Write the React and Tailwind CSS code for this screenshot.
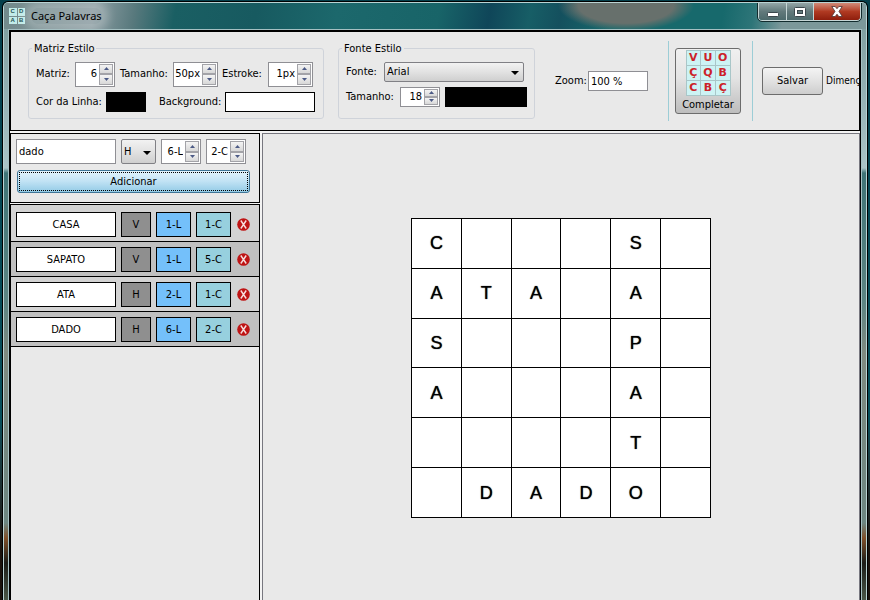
const WORDS = [
  { word: "CASA", dir: "V", line: 1, col: 1 },
  { word: "SAPATO", dir: "V", line: 1, col: 5 },
  { word: "ATA", dir: "H", line: 2, col: 1 },
  { word: "DADO", dir: "H", line: 6, col: 2 },
];

const SIZE = 6;

function buildMatrix() {
  const matrix = Array.from({ length: SIZE }, () => Array(SIZE).fill(""));
  for (const { word, dir, line, col } of WORDS) {
    [...word].forEach((letter, i) => {
      const r = line - 1 + (dir === "V" ? i : 0);
      const c = col - 1 + (dir === "H" ? i : 0);
      matrix[r][c] = letter;
    });
  }
  return matrix;
}

function AppIcon() {
  return (
    <span
      aria-hidden="true"
      className="grid size-4 shrink-0 grid-cols-2 gap-px font-['Liberation_Sans',sans-serif] text-[6px] leading-[7px] font-bold text-[#1f4f50]"
    >
      {["C", "D", "A", "B"].map((l) => (
        <span key={l} className="bg-[#c2ebe8] text-center">
          {l}
        </span>
      ))}
    </span>
  );
}

function TitleBar() {
  return (
    <header className="flex h-[26px] items-start justify-between pr-[5px] pl-[5px]">
      <div className="flex items-center gap-[6px] pt-[5px]">
        <AppIcon />
        <h1 className="rounded-full bg-white/15 font-['Noto_Sans',sans-serif] text-[11px] leading-4 text-black shadow-[0_0_8px_7px_rgba(255,255,255,0.22)]">
          Caça Palavras
        </h1>
      </div>
      <div className="flex h-[18px] overflow-hidden rounded-b-[4px] border border-t-0 border-[#c6d6d6] outline outline-[#122c2e]">
        <button
          aria-label="Minimizar"
          className="flex w-[28px] items-center justify-center border-r border-[#c6d6d6] bg-linear-to-b from-[#93a5a6] via-[#62797b] via-50% to-[#4d6a6c]"
        >
          <svg width="12" height="12" viewBox="0 0 12 12">
            <rect x="0.5" y="6.5" width="11" height="4" rx="1" fill="#fff" stroke="#3b474c" />
          </svg>
        </button>
        <button
          aria-label="Maximizar"
          className="flex w-[27px] items-center justify-center border-r border-[#c6d6d6] bg-linear-to-b from-[#93a5a6] via-[#62797b] via-50% to-[#4d6a6c]"
        >
          <svg width="12" height="10" viewBox="0 0 12 10">
            <rect x="0.5" y="0.5" width="11" height="9" rx="1" fill="#fff" stroke="#3b474c" />
            <rect x="3.5" y="3.5" width="5" height="3" fill="#62797b" stroke="#3b474c" />
          </svg>
        </button>
        <button
          aria-label="Fechar"
          className="flex w-[46px] items-center justify-center bg-linear-to-b from-[#d08a78] via-[#b03a22] via-50% to-[#8e1d0c]"
        >
          <svg width="12" height="11" viewBox="0 0 12 11">
            <path
              d="M0.8 0.5h3.4L6 2.7 7.8 0.5h3.4L8 5.4l3.3 5.1H7.8L6 8.2 4.2 10.5H0.7L4 5.4z"
              fill="#fff"
              stroke="#4b3434"
              strokeWidth="0.8"
            />
          </svg>
        </button>
      </div>
    </header>
  );
}

function Spinner({ id, label, value, className }) {
  return (
    <span className={"flex shrink-0 border border-[#8f8f94] bg-white " + className}>
      <input
        id={id}
        aria-label={label}
        defaultValue={value}
        className="w-0 min-w-0 flex-1 bg-transparent pr-px text-right outline-none"
      />
      <span className="flex w-[16px] flex-col p-px">
        {["M0 3h5L2.5 0z", "M0 0h5L2.5 3z"].map((d, i) => (
          <button
            key={d}
            aria-label={i === 0 ? "Aumentar" : "Diminuir"}
            className="flex min-h-0 flex-1 items-center justify-center border border-[#a3a3a8] bg-linear-to-b from-[#f4f4f4] to-[#d8d8d8]"
          >
            <svg width="5" height="3" viewBox="0 0 5 3" fill="#4c5a86">
              <path d={d} />
            </svg>
          </button>
        ))}
      </span>
    </span>
  );
}

function Dropdown({ id, label, options, className }) {
  return (
    <span className={"relative flex shrink-0 " + className}>
      <select
        id={id}
        aria-label={label}
        className="w-full appearance-none rounded-[2px] border border-[#808085] bg-linear-to-b from-[#f2f2f2] via-[#e2e2e2] via-50% to-[#cfcfcf] pl-[2px] outline-none"
      >
        {options.map((o) => (
          <option key={o}>{o}</option>
        ))}
      </select>
      <svg
        width="8"
        height="4"
        viewBox="0 0 8 4"
        className="pointer-events-none absolute top-1/2 right-[5px] -mt-px"
      >
        <path d="M0 0h8L4 4z" />
      </svg>
    </span>
  );
}

function ColorBox({ id, label, value, className }) {
  return (
    <input
      type="color"
      id={id}
      aria-label={label}
      defaultValue={value}
      className={
        "h-5 shrink-0 appearance-none border border-black p-0 [&::-webkit-color-swatch]:border-0 [&::-webkit-color-swatch]:rounded-none [&::-webkit-color-swatch-wrapper]:p-0 " +
        className
      }
    />
  );
}

function Group({ title, className, children }) {
  return (
    <fieldset
      className={"mb-[2px] shrink-0 rounded-[3px] border border-[#cfd3da] px-[7px] " + className}
    >
      <legend className="-ml-[4px] px-[2px] leading-[14px]">{title}</legend>
      {children}
    </fieldset>
  );
}

function CompletarButton() {
  return (
    <button className="flex h-[66px] w-[66px] shrink-0 flex-col items-center justify-between rounded-[3px] border border-[#6c6c6c] bg-linear-to-b from-[#f0f0f0] from-0% via-[#e4e4e4] via-45% to-[#bdbdbd] pt-px">
      <span
        aria-hidden="true"
        className="grid w-[45px] grid-cols-3 gap-px border border-[#a9c6c8] bg-[#a9c6c8] font-['DejaVu_Sans',sans-serif] text-[11px] leading-[14px] font-bold text-[#cc2229]"
      >
        {[..."VUOÇQBCBÇ"].map((l, i) => (
          <span key={i} className="h-[14px] bg-[#cdf3f4] text-center">
            {l}
          </span>
        ))}
      </span>
      <span className="leading-4">Completar</span>
    </button>
  );
}

function Toolbar() {
  return (
    <section className="flex h-[100px] shrink-0 items-center overflow-hidden border border-black bg-[#e9e9e9] pl-[17px] whitespace-nowrap">
      <Group title="Matriz Estilo" className="h-[77px] w-[296px]">
        <div className="mt-[6px] flex h-[25px]">
          <label htmlFor="matriz" className="w-[39px] self-center">Matriz:</label>
          <Spinner id="matriz" value="6" className="w-[40px]" />
          <label htmlFor="tamanho" className="ml-[5px] w-[53px] self-center">Tamanho:</label>
          <Spinner id="tamanho" value="50px" className="w-[45px]" />
          <label htmlFor="estroke" className="ml-[4px] w-[46px] self-center">Estroke:</label>
          <Spinner id="estroke" value="1px" className="w-[45px]" />
        </div>
        <div className="mt-[5px] flex items-center">
          <label htmlFor="cor-linha" className="w-[70px]">Cor da Linha:</label>
          <ColorBox id="cor-linha" value="#000000" className="w-[40px]" />
          <label htmlFor="background" className="ml-[13px] w-[66px]">Background:</label>
          <ColorBox id="background" value="#ffffff" className="w-[90px]" />
        </div>
      </Group>

      <Group title="Fonte Estilo" className="ml-[14px] h-[77px] w-[196px]">
        <div className="mt-[6px] flex h-5">
          <label htmlFor="fonte" className="w-[38px] self-center">Fonte:</label>
          <Dropdown id="fonte" options={["Arial"]} className="w-[140px]" />
        </div>
        <div className="mt-[5px] flex h-5">
          <label htmlFor="fonte-tamanho" className="w-[54px] self-center">Tamanho:</label>
          <Spinner id="fonte-tamanho" value="18" className="w-[40px]" />
          <ColorBox label="Cor da fonte" value="#000000" className="ml-[5px] w-[82px]" />
        </div>
      </Group>

      <label htmlFor="zoom" className="ml-5 w-[33px] shrink-0">Zoom:</label>
      <input
        id="zoom"
        defaultValue="100 %"
        className="h-5 w-[60px] shrink-0 border border-[#8f8f94] bg-white px-[2px] outline-none"
      />

      <div className="ml-5 flex h-20 shrink-0 items-center border-x border-[#9ccdd6] pr-[11px] pl-[6px]">
        <CompletarButton />
      </div>

      <button className="ml-[9px] h-7 w-[61px] shrink-0 rounded-[3px] border border-[#6c6c6c] bg-linear-to-b from-[#f4f4f4] via-[#e2e2e2] via-50% to-[#cdcdcd]">
        Salvar
      </button>
      <span className="ml-[3px] shrink-0 text-[10px]">Dimenç</span>
    </section>
  );
}

function WordForm() {
  return (
    <form
      onSubmit={(e) => e.preventDefault()}
      className="flex h-[70px] flex-col gap-[6px] border border-black bg-[#e9e9e9] px-[5px] pt-[5px]"
    >
      <div className="flex h-[25px] gap-[5px]">
        <input
          aria-label="Palavra"
          defaultValue="dado"
          className="w-[100px] border border-[#8f8f94] bg-white px-[2px] outline-none"
        />
        <Dropdown label="Direção" options={["H", "V"]} className="w-[35px]" />
        <Spinner label="Linha" value="6-L" className="w-[40px]" />
        <Spinner label="Coluna" value="2-C" className="w-[40px]" />
      </div>
      <button className="mx-px h-[23px] w-[233px] rounded-[3px] border border-[#3f7596] bg-linear-to-b from-[#e4f4fc] via-[#c0e2f4] via-50% to-[#93cbe6] p-px">
        <span className="flex h-full items-center justify-center border border-dotted border-black">
          Adicionar
        </span>
      </button>
    </form>
  );
}

function WordRow({ item, shaded }) {
  return (
    <li
      className={
        "flex h-[35px] items-center gap-[5px] border-b border-black px-[5px] text-center leading-[23px] " +
        (shaded ? "bg-[#c0c0c0]" : "bg-[#d3d3d3]")
      }
    >
      <span className="w-[100px] border border-black bg-white">{item.word}</span>
      <span className="w-[30px] border border-black bg-[#8f8f8f]">{item.dir}</span>
      <span className="w-[35px] border border-black bg-[#74c0fa]">{item.line}-L</span>
      <span className="w-[35px] border border-black bg-[#97d0de]">{item.col}-C</span>
      <button aria-label={"Remover " + item.word} className="ml-px">
        <svg width="13" height="13" viewBox="0 0 13 13" className="block">
          <circle cx="6.5" cy="6.5" r="6.3" fill="#bf1414" />
          <path d="M3.8 2.5l5.4 8M9.2 2.5l-5.4 8" stroke="#f6dede" strokeWidth="1.4" fill="none" />
        </svg>
      </button>
    </li>
  );
}

function Board() {
  return (
    <table className="mx-auto mt-[84px] h-[300px] w-[300px] table-fixed border-collapse bg-white font-['Liberation_Sans',Arial,sans-serif] text-[18px] leading-5 text-black text-shadow-[0_0_1px_#000]">
      <tbody>
        {buildMatrix().map((line, r) => (
          <tr key={r}>
            {line.map((letter, c) => (
              <td key={c} className="border border-black p-0 text-center align-middle">
                {letter}
              </td>
            ))}
          </tr>
        ))}
      </tbody>
    </table>
  );
}

export default function App() {
  return (
    <div className="h-screen overflow-hidden bg-linear-to-b from-[#043f4b] from-0% via-[#06505c] via-70% to-[#1a120c] to-92% px-[2px] pt-px font-['DejaVu_Sans_Condensed','DejaVu_Sans',sans-serif] text-[11px] leading-[14px] text-black">
      <div className="h-full overflow-hidden rounded-t-[6px] border border-b-0 border-black">
        <div className="flex h-full flex-col overflow-hidden rounded-t-[5px] border border-b-0 border-[#b9d3d3] bg-[linear-gradient(180deg,#7a9a9b_0,#a9c3c6_165px,#3f7476_170px,#5d8583_300px,#7f8a80_350px,#6c8681_520px,#80502a_535px,#1c1d18_560px,#4f5d4c_600px)]">
          <div className="bg-[radial-gradient(ellipse_68px_26px_at_622px_2px,#67706c_0,#67706c_70%,transparent_100%),linear-gradient(100deg,#71898b_0,#8c9da2_90px,#58797d_130px,#1a5f63_170px,#175a60_250px,#1c686c_330px,#186468_430px,#0f4659_480px,#175e66_520px,#14505e_550px,#17696c_600px,#17696c_710px,#2d7578_740px,#7c989a_770px)]">
            <TitleBar />
          </div>
          <div className="min-h-0 flex-1 px-[4px]">
            <div className="h-full border border-b-0 border-[#a5c0c2]">
              <div className="flex h-full flex-col border border-b-0 border-black bg-[#f3f3f3]">
                <Toolbar />
                <div className="mt-[2px] flex min-h-0 flex-1 gap-[2px]">
                  <aside className="flex w-[250px] shrink-0 flex-col gap-px">
                    <WordForm />
                    <div className="min-h-0 flex-1 border border-b-0 border-black bg-[#e9e9e9]">
                      <ul className="bg-[#d3d3d3] pt-[2px]">
                        {WORDS.map((item, i) => (
                          <WordRow key={item.word} item={item} shaded={i % 2 === 1} />
                        ))}
                      </ul>
                    </div>
                  </aside>
                  <main className="min-w-0 flex-1 border border-b-0 border-[#77777f] bg-[#e9e9e9]">
                    <Board />
                  </main>
                </div>
              </div>
            </div>
          </div>
        </div>
      </div>
    </div>
  );
}
